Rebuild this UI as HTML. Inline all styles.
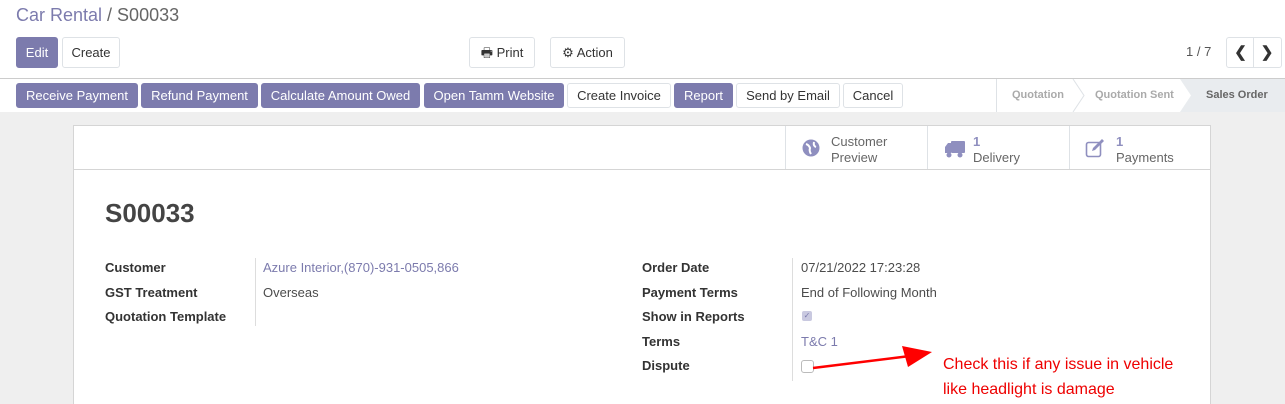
<!DOCTYPE html>
<html style="overflow:hidden;height:404px"><head><meta charset="utf-8"><style>
*{box-sizing:border-box;margin:0;padding:0}
body{width:1285px;height:404px;overflow:hidden;font-family:"Liberation Sans",sans-serif;font-size:13px;color:#4c4c4c;background:#fff;position:relative}
.a{position:absolute}
.btn{position:absolute;height:31px;line-height:29px;border:1px solid #dee2e6;border-radius:3px;background:#fff;color:#333;text-align:center;font-size:13px}
.p{background:#7c7bad;border-color:#7c7bad;color:#fff}
.sb{height:25px;line-height:23px;top:83px}
.lbl{position:absolute;font-weight:bold;color:#333;font-size:13px}
.val{position:absolute;font-size:13px;color:#4c4c4c}
.lnk{color:#7c7bad}
</style></head><body>
<div class="a" style="left:16px;top:5px;font-size:18px;color:#7c7bad">Car Rental <span style="color:#666">/ S00033</span></div>
<div class="btn p" style="left:16px;top:37px;width:42px">Edit</div>
<div class="btn" style="left:62px;top:37px;width:58px">Create</div>
<div class="btn" style="left:469px;top:37px;width:66px">&#128438; Print</div>
<div class="btn" style="left:550px;top:37px;width:75px">&#9881; Action</div>
<div class="a" style="left:1186px;top:44px;color:#555">1 / 7</div>
<div class="btn" style="left:1226px;top:37px;width:56px;font-weight:bold;font-size:15px"><span style="display:inline-block;width:26px;border-right:1px solid #dee2e6">&#10094;</span><span style="display:inline-block;width:26px">&#10095;</span></div>
<div class="a" style="left:0;top:78px;width:1285px;height:1px;background:#ccc"></div>
<div class="a" style="left:0;top:112px;width:1285px;height:292px;background:#efefef"></div>
<div class="btn p sb" style="left:16px;width:122px">Receive Payment</div>
<div class="btn p sb" style="left:141px;width:117px">Refund Payment</div>
<div class="btn p sb" style="left:261px;width:159px">Calculate Amount Owed</div>
<div class="btn p sb" style="left:424px;width:140px">Open Tamm Website</div>
<div class="btn sb" style="left:567px;width:104px">Create Invoice</div>
<div class="btn p sb" style="left:674px;width:59px">Report</div>
<div class="btn sb" style="left:736px;width:104px">Send by Email</div>
<div class="btn sb" style="left:843px;width:60px">Cancel</div>
<div class="a" style="left:996px;top:79px;width:1px;height:33px;background:#dee2e6"></div>
<div class="a" style="left:1012px;top:89px;font-size:11px;font-weight:bold;color:#aaa">Quotation</div>
<svg class="a" style="left:1070px;top:79px" width="20" height="33"><path d="M3 0 L14 16.5 L3 33" fill="none" stroke="#dee2e6"/></svg>
<div class="a" style="left:1095px;top:89px;font-size:11px;font-weight:bold;color:#aaa">Quotation Sent</div>
<svg class="a" style="left:1180px;top:79px" width="105" height="33"><path d="M0 0 L105 0 L105 33 L0 33 L11 16.5 Z" fill="#e9ecef"/></svg>
<div class="a" style="left:1206px;top:89px;font-size:11px;font-weight:bold;color:#666">Sales Order</div>
<div class="a" style="left:73px;top:125px;width:1138px;height:279px;background:#fff;border:1px solid #d5d5d5;border-bottom:none"></div>
<div class="a" style="left:74px;top:169px;width:1136px;height:1px;background:#d5d5d5"></div>
<div class="a" style="left:785px;top:126px;width:1px;height:43px;background:#dee2e6"></div>
<div class="a" style="left:927px;top:126px;width:1px;height:43px;background:#dee2e6"></div>
<div class="a" style="left:1069px;top:126px;width:1px;height:43px;background:#dee2e6"></div>
<svg class="a" style="left:802px;top:139px" width="18" height="18"><circle cx="9" cy="9" r="8.5" fill="#8f8fbf"/><path d="M4 5 Q7 6 8 9 Q7 12 9 15 M12 3 Q11 7 14 8" stroke="#fff" stroke-width="2" fill="none"/></svg>
<div class="a" style="left:831px;top:134px;line-height:16px;color:#666">Customer<br>Preview</div>
<svg class="a" style="left:944px;top:140px" width="22" height="19"><rect x="7" y="1" width="14" height="12" rx="1" fill="#8f8fbf"/><path d="M1 7 L4 3 L7 3 L7 13 L1 13Z" fill="#8f8fbf"/><circle cx="5" cy="15" r="2.5" fill="#8f8fbf"/><circle cx="16" cy="15" r="2.5" fill="#8f8fbf"/></svg>
<div class="a" style="left:973px;top:134px;line-height:16px;color:#666"><b style="color:#8f8fbf">1</b><br>Delivery</div>
<svg class="a" style="left:1085px;top:138px" width="22" height="20"><rect x="1.5" y="4.5" width="14" height="14" rx="2" fill="none" stroke="#8f8fbf" stroke-width="1.6"/><path d="M7 13 L8 10 L17 1 L19 3 L10 12 Z" fill="#8f8fbf"/></svg>
<div class="a" style="left:1116px;top:134px;line-height:16px;color:#666"><b style="color:#8f8fbf">1</b><br>Payments</div>
<div class="a" style="left:105px;top:198px;font-size:26px;font-weight:bold;color:#444">S00033</div>
<div class="a" style="left:255px;top:258px;width:1px;height:68px;background:#ddd"></div>
<div class="lbl" style="left:105px;top:260px">Customer</div>
<div class="lbl" style="left:105px;top:285px">GST Treatment</div>
<div class="lbl" style="left:105px;top:309px">Quotation Template</div>
<div class="val lnk" style="left:263px;top:260px">Azure Interior,(870)-931-0505,866</div>
<div class="val" style="left:263px;top:285px">Overseas</div>
<div class="a" style="left:792px;top:258px;width:1px;height:123px;background:#ddd"></div>
<div class="lbl" style="left:642px;top:260px">Order Date</div>
<div class="lbl" style="left:642px;top:285px">Payment Terms</div>
<div class="lbl" style="left:642px;top:309px">Show in Reports</div>
<div class="lbl" style="left:642px;top:334px">Terms</div>
<div class="lbl" style="left:642px;top:358px">Dispute</div>
<div class="val" style="left:801px;top:260px">07/21/2022 17:23:28</div>
<div class="val" style="left:801px;top:285px">End of Following Month</div>
<div class="a" style="left:802px;top:311px;width:10px;height:10px;border-radius:2px;background:#c9c9e0;color:#7c7bad;font-size:8px;line-height:10px;text-align:center">&#10003;</div>
<div class="val lnk" style="left:801px;top:334px">T&amp;C 1</div>
<div class="a" style="left:801px;top:360px;width:13px;height:13px;border-radius:3px;border:1px solid #bbb;background:#fff"></div>
<svg class="a" style="left:810px;top:342px" width="125" height="30"><path d="M3 26 L100 14" stroke="#f00" stroke-width="2.5"/><path d="M92 4 L122 10 L98 25 Z" fill="#f00"/></svg>
<div class="a" style="left:943px;top:352px;font-size:16px;color:#e00;line-height:25px">Check this if any issue in vehicle<br>like headlight is damage</div>
</body></html>
